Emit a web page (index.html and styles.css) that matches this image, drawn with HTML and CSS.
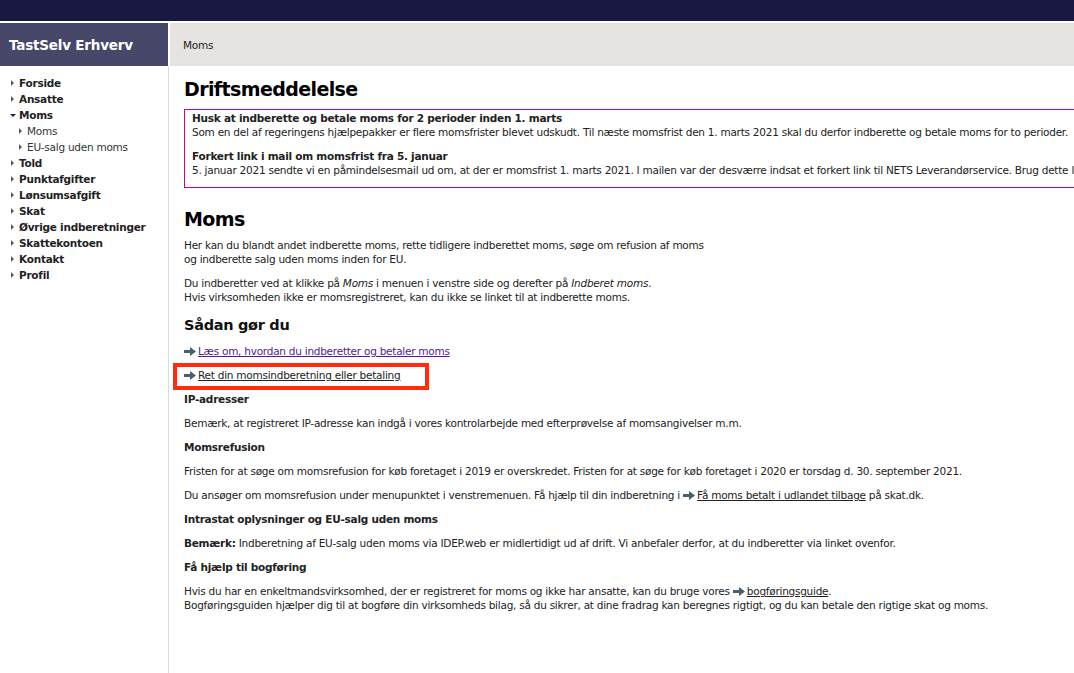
FILE: index.html
```html
<!DOCTYPE html>
<html lang="da">
<head>
    <meta charset="UTF-8">
    <meta name="viewport" content="width=device-width, initial-scale=1.0">
    <title>TastSelv Erhverv - Moms</title>
    <link rel="stylesheet" href="styles.css">
</head>
<body>
    <div class="topbar"></div>

    <div class="header">
        <div class="brand">TastSelv Erhverv</div>
        <div class="crumbs">Moms</div>
    </div>

    <div class="page">
        <ul class="menu">
            <li class="item"><span class="tri"></span>Forside</li>
            <li class="item"><span class="tri"></span>Ansatte</li>
            <li class="item open"><span class="tri down"></span>Moms</li>
            <li class="sub"><span class="tri"></span>Moms</li>
            <li class="sub"><span class="tri"></span>EU-salg uden moms</li>
            <li class="item"><span class="tri"></span>Told</li>
            <li class="item"><span class="tri"></span>Punktafgifter</li>
            <li class="item"><span class="tri"></span>Lønsumsafgift</li>
            <li class="item"><span class="tri"></span>Skat</li>
            <li class="item"><span class="tri"></span>Øvrige indberetninger</li>
            <li class="item"><span class="tri"></span>Skattekontoen</li>
            <li class="item"><span class="tri"></span>Kontakt</li>
            <li class="item"><span class="tri"></span>Profil</li>
        </ul>

        <div class="content">
            <h1>Driftsmeddelelse</h1>

            <div class="notice">
                <p><strong>Husk at indberette og betale moms for 2 perioder inden 1. marts</strong><br>
                Som en del af regeringens hjælpepakker er flere momsfrister blevet udskudt. Til næste momsfrist den 1. marts 2021 skal du derfor indberette og betale moms for to perioder.</p>
                <p><strong>Forkert link i mail om momsfrist fra 5. januar</strong><br>
                5. januar 2021 sendte vi en påmindelsesmail ud om, at der er momsfrist 1. marts 2021. I mailen var der desværre indsat et forkert link til NETS Leverandørservice. Brug dette link i stedet.</p>
            </div>

            <h1 class="second">Moms</h1>
            <p class="first">Her kan du blandt andet indberette moms, rette tidligere indberettet moms, søge om refusion af moms<br>
            og indberette salg uden moms inden for EU.</p>
            <p>Du indberetter ved at klikke på <em>Moms</em> i menuen i venstre side og derefter på <em>Indberet moms</em>.<br>
            Hvis virksomheden ikke er momsregistreret, kan du ikke se linket til at indberette moms.</p>

            <h2>Sådan gør du</h2>
            <p><a class="visited" href="#"><svg class="arrow" width="12" height="9" viewBox="0 0 12 9"><path d="M0 3h6V0l6 4.5L6 9V6H0z"/></svg>Læs om, hvordan du indberetter og betaler moms</a></p>
            <p class="marked"><a href="#"><svg class="arrow" width="12" height="9" viewBox="0 0 12 9"><path d="M0 3h6V0l6 4.5L6 9V6H0z"/></svg>Ret din momsindberetning eller betaling</a></p>

            <h3>IP-adresser</h3>
            <p>Bemærk, at registreret IP-adresse kan indgå i vores kontrolarbejde med efterprøvelse af momsangivelser m.m.</p>

            <h3>Momsrefusion</h3>
            <p>Fristen for at søge om momsrefusion for køb foretaget i 2019 er overskredet. Fristen for at søge for køb foretaget i 2020 er torsdag d. 30. september 2021.</p>
            <p>Du ansøger om momsrefusion under menupunktet i venstremenuen. Få hjælp til din indberetning i <a href="#"><svg class="arrow" width="12" height="9" viewBox="0 0 12 9"><path d="M0 3h6V0l6 4.5L6 9V6H0z"/></svg>Få moms betalt i udlandet tilbage</a> på skat.dk.</p>

            <h3>Intrastat oplysninger og EU-salg uden moms</h3>
            <p><strong>Bemærk:</strong> Indberetning af EU-salg uden moms via IDEP.web er midlertidigt ud af drift. Vi anbefaler derfor, at du indberetter via linket ovenfor.</p>

            <h3>Få hjælp til bogføring</h3>
            <p>Hvis du har en enkeltmandsvirksomhed, der er registreret for moms og ikke har ansatte, kan du bruge vores <a href="#"><svg class="arrow" width="12" height="9" viewBox="0 0 12 9"><path d="M0 3h6V0l6 4.5L6 9V6H0z"/></svg>bogføringsguide</a>.<br>
            Bogføringsguiden hjælper dig til at bogføre din virksomheds bilag, så du sikrer, at dine fradrag kan beregnes rigtigt, og du kan betale den rigtige skat og moms.</p>
        </div>
    </div>
</body>
</html>
```

FILE: styles.css
```css
body {
    margin: 0;
    font-family: "DejaVu Sans", Verdana, sans-serif;
    font-size: 10.5px;
    letter-spacing: -0.25px;
    line-height: 14px;
    color: #222;
    background-color: #fff;
    overflow: hidden;
}

.topbar {
    height: 21px;
    background-color: #181840;
}

.header {
    display: flex;
    height: 43px;
    margin-top: 2px;
    gap: 2px;
}

.brand {
    width: 159px;
    padding-left: 9px;
    background-color: #47476a;
    color: #fff;
    font-size: 13.5px;
    letter-spacing: -0.2px;
    font-weight: bold;
    display: flex;
    align-items: center;
}

.crumbs {
    flex: 1;
    background-color: #e7e3e0;
    padding-left: 13px;
    display: flex;
    align-items: center;
    color: #222;
}

.page {
    display: flex;
    min-height: 620px;
}

.menu {
    width: 168px;
    flex-shrink: 0;
    margin: 0;
    padding: 9px 0 0 0;
    list-style: none;
    border-right: 1px solid #d3dde8;
    line-height: 16px;
}

.menu .item {
    font-weight: bold;
    padding-left: 11px;
    color: #222;
}

.menu .sub {
    padding-left: 19px;
    color: #333;
}

.tri {
    display: inline-block;
    width: 0;
    height: 0;
    border-top: 3px solid transparent;
    border-bottom: 3px solid transparent;
    border-left: 3px solid #5a5a66;
    margin-right: 5px;
    vertical-align: 1px;
}

.tri.down {
    border-left: 3px solid transparent;
    border-right: 3px solid transparent;
    border-top: 3px solid #22224a;
    border-bottom: 0;
    margin-left: -1px;
    margin-right: 3px;
    vertical-align: 2px;
}

.content {
    flex: 1;
    padding: 11px 0 0 15px;
    white-space: nowrap;
    overflow: hidden;
}

h1 {
    font-size: 19px;
    letter-spacing: -0.6px;
    line-height: 24px;
    margin: 0 0 8px 0;
    color: #000;
}

h1.second {
    margin: 19px 0 0 0;
}

h2 {
    font-size: 14.5px;
    letter-spacing: -0.3px;
    line-height: 18px;
    margin: 12px 0 0 0;
    color: #111;
}

h3 {
    font-size: 10.5px;
    line-height: 14px;
    margin: 10px 0 0 0;
    color: #222;
}

p {
    margin: 10px 0 0 0;
}

p.first {
    margin-top: 7px;
}

.notice {
    border: 1px solid #c000a0;
    padding: 1px 7px 0 7px;
    margin-right: -400px;
}

.notice p {
    margin: 0 0 10px 0;
}

a {
    color: #222;
    text-decoration: underline;
}

a.visited {
    color: #551a8b;
}

.arrow {
    fill: #46606f;
    margin-right: 2px;
    vertical-align: -1px;
}

.marked {
    position: relative;
}

.marked::after {
    content: "";
    position: absolute;
    left: -11px;
    top: -5px;
    width: 248px;
    height: 19px;
    border: 4px solid #fe2c0c;
}
```
